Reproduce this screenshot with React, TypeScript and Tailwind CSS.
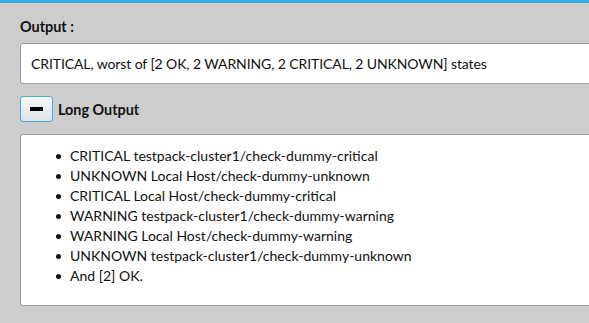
export default function App() {
  const items = [
    "CRITICAL testpack-cluster1/check-dummy-critical",
    "UNKNOWN Local Host/check-dummy-unknown",
    "CRITICAL Local Host/check-dummy-critical",
    "WARNING testpack-cluster1/check-dummy-warning",
    "WARNING Local Host/check-dummy-warning",
    "UNKNOWN testpack-cluster1/check-dummy-unknown",
    "And [2] OK.",
  ];

  return (
    <div className="w-[589px] h-[323px] overflow-hidden bg-[#cdcdcd] font-['Lato',sans-serif] text-[#111]">
      <div className="h-[3px] bg-[#36a9e1]" />
      <div className="pl-5 pt-4 w-[640px]">
        <div className="text-[14.4px] font-bold leading-4 h-4">Output :</div>
        <div className="mt-2 h-[41px] bg-white border border-[#9a9a9a] rounded-[3px] flex items-center pl-[10px] text-[14px] tracking-[-0.1px]">
          CRITICAL, worst of [2 OK, 2 WARNING, 2 CRITICAL, 2 UNKNOWN] states
        </div>
        <div className="mt-3 flex items-center gap-[5px]">
          <button className="w-[33px] h-[26px] rounded-[3px] border border-[#4aa8e4] bg-gradient-to-b from-[#f6f8fa] to-[#dde3e8] flex items-center justify-center">
            <span className="block w-[13px] h-1 bg-black" />
          </button>
          <span className="text-[14.4px] font-bold pt-[1px]">Long Output</span>
        </div>
        <div className="mt-3 h-[172px] bg-white border border-[#9a9a9a] rounded-[3px] pt-[11px] pl-[35px]">
          <ul className="text-[14px] leading-5">
            {items.map((t) => (
              <li key={t} className="flex items-center gap-[9px]">
                <span className="block w-[5px] h-[5px] rounded-full bg-[#111]" />
                <span>{t}</span>
              </li>
            ))}
          </ul>
        </div>
      </div>
    </div>
  );
}
